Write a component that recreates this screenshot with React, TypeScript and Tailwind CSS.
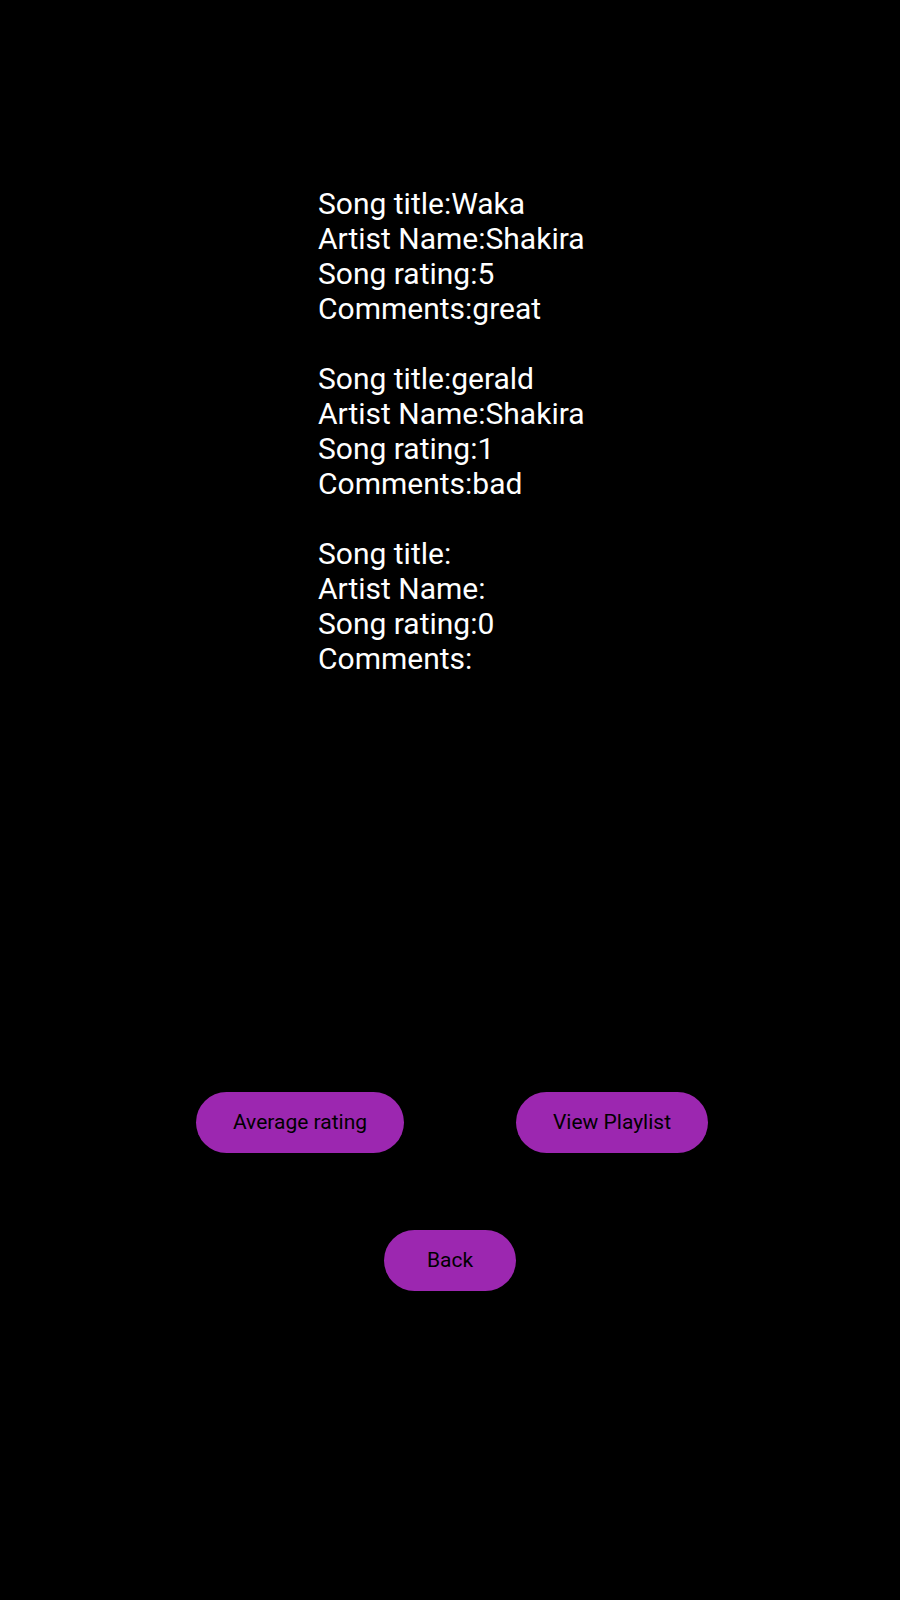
const songs = [
  { title: "Waka", artist: "Shakira", rating: 5, comments: "great" },
  { title: "gerald", artist: "Shakira", rating: 1, comments: "bad" },
  { title: "", artist: "", rating: 0, comments: "" },
];

const PillButton = ({ label, className = "" }: { label: string; className?: string }) => (
  <button
    className={`h-[61px] rounded-full bg-[#9c27b0] text-[21px] text-black ${className}`}
  >
    {label}
  </button>
);

export default function App() {
  return (
    <div
      className="flex min-h-[1600px] w-full flex-col bg-black"
      style={{ fontFamily: "Roboto, 'Liberation Sans', sans-serif" }}
    >
      <div className="flex flex-col gap-[35px] pl-[318px] pt-[186px] text-[30px] leading-[35px] text-white">
        {songs.map((s, i) => (
          <div key={i}>
            <div>Song title:{s.title}</div>
            <div>Artist Name:{s.artist}</div>
            <div>Song rating:{s.rating}</div>
            <div>Comments:{s.comments}</div>
          </div>
        ))}
      </div>

      <div className="mt-[416px] flex flex-row gap-[112px] pl-[196px]">
        <PillButton label="Average rating" className="w-[208px]" />
        <PillButton label="View Playlist" className="w-[192px]" />
      </div>

      <div className="mt-[77px] flex pl-[384px]">
        <PillButton label="Back" className="w-[132px]" />
      </div>
    </div>
  );
}
